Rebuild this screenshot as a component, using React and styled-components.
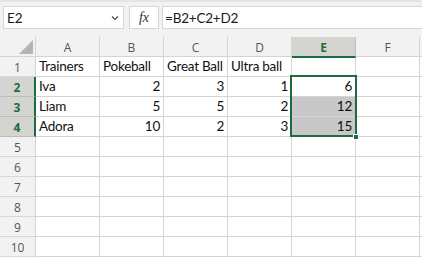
import React from "react";
import styled, { createGlobalStyle } from "styled-components";

const Global = createGlobalStyle`
  html, body { margin: 0; padding: 0; background: #ffffff; overflow: hidden; }
  * { box-sizing: border-box; }
`;

const Page = styled.div`
  width: 422px;
  height: 257px;
  overflow: hidden;
  background: #ffffff;
`;

const Toolbar = styled.div`
  height: 37px;
  background: #f2f2f2;
  border-top: 2px solid #e4e4e4;
  display: flex;
  align-items: flex-start;
  padding: 4px 0 0 3px;
  gap: 5px;
`;

const NameBox = styled.div`
  width: 121px;
  height: 23px;
  background: #fff;
  border: 1px solid #d6d6d6;
  display: flex;
  align-items: center;
  justify-content: space-between;
  padding: 0 4px 0 3px;
  font-family: "Lato", "Liberation Sans", sans-serif;
  font-size: 13.5px;
  color: #1b1b1b;
`;

const FxBox = styled.div`
  width: 30px;
  height: 23px;
  background: #fff;
  border: 1px solid #d6d6d6;
  display: flex;
  align-items: center;
  justify-content: center;
  font-family: "Liberation Serif", serif;
  font-style: italic;
  font-size: 14px;
  color: #333;
  margin-right: -2px;
`;

const FormulaBox = styled.div`
  flex: 1;
  height: 23px;
  background: #fff;
  border: 1px solid #d6d6d6;
  border-right: none;
  display: flex;
  align-items: center;
  padding-left: 2px;
  font-family: "Lato", "Liberation Sans", sans-serif;
  font-size: 13.5px;
  letter-spacing: -0.2px;
  color: #1b1b1b;
`;

const Sheet = styled.div`
  position: relative;
  display: grid;
  grid-template-columns: 36px repeat(6, 64px) 10px;
  grid-auto-rows: 20px;
`;

const Corner = styled.div`
  background: #f2f2f2;
  border-right: 1px solid #d4d4d4;
  border-bottom: 1px solid #d4d4d4;
  position: relative;
  &::after {
    content: "";
    position: absolute;
    right: 2px;
    bottom: 2px;
    width: 0;
    height: 0;
    border-style: solid;
    border-width: 0 0 14px 14px;
    border-color: transparent transparent #b4b4b4 transparent;
  }
`;

const ColHead = styled.div`
  background: ${(p) => (p.$active ? "#d4d4d0" : "#f2f2f2")};
  border-right: 1px solid ${(p) => (p.$active ? "#bdbdb8" : "#d4d4d4")};
  border-bottom: ${(p) => (p.$active ? "2px solid #1d6b40" : "1px solid #d4d4d4")};
  margin-bottom: ${(p) => (p.$active ? "-1px" : "0")};
  display: flex;
  align-items: center;
  justify-content: center;
  padding-top: 1px;
  font-family: "Open Sans", "Liberation Sans", sans-serif;
  font-size: 12px;
  font-weight: ${(p) => (p.$active ? 700 : 400)};
  color: ${(p) => (p.$active ? "#1d6b40" : "#555555")};
  z-index: ${(p) => (p.$active ? 1 : 0)};
`;

const RowHead = styled.div`
  background: ${(p) => (p.$active ? "#d4d4d0" : "#f2f2f2")};
  border-right: ${(p) => (p.$active ? "2px solid #1d6b40" : "1px solid #d4d4d4")};
  border-bottom: 1px solid ${(p) => (p.$active ? "#bdbdb8" : "#d9d9d9")};
  display: flex;
  align-items: center;
  justify-content: center;
  padding-top: 1px;
  font-family: "Open Sans", "Liberation Sans", sans-serif;
  font-size: 12px;
  font-weight: ${(p) => (p.$active ? 700 : 400)};
  color: ${(p) => (p.$active ? "#1d6b40" : "#555555")};
`;

const Cell = styled.div`
  background: ${(p) => (p.$fill ? "#c8c8c8" : "#ffffff")};
  border-right: 1px solid #d4d4d4;
  border-bottom: 1px solid #d4d4d4;
  display: flex;
  align-items: flex-end;
  justify-content: ${(p) => (p.$num ? "flex-end" : "flex-start")};
  padding: 0 3px 1px 3px;
  font-family: "Lato", "Liberation Sans", sans-serif;
  font-size: 13.5px;
  letter-spacing: -0.25px;
  line-height: 18px;
  color: #111;
  white-space: nowrap;
`;

const Selection = styled.div`
  position: absolute;
  left: 290px;
  top: 38px;
  width: 67px;
  height: 62px;
  border: 2px solid #1d6b40;
  pointer-events: none;
`;

const Handle = styled.div`
  position: absolute;
  left: 353px;
  top: 97px;
  width: 6px;
  height: 6px;
  background: #1d6b40;
  border: 1px solid #ffffff;
`;

const cols = ["A", "B", "C", "D", "E", "F", ""];
const data = [
  ["Trainers", "Pokeball", "Great Ball", "Ultra ball", "", ""],
  ["Iva", 2, 3, 1, 6, ""],
  ["Liam", 5, 5, 2, 12, ""],
  ["Adora", 10, 2, 3, 15, ""],
];

function Chevron() {
  return (
    <svg width="8" height="6" viewBox="0 0 8 6">
      <path d="M1 1.5 L4 4.5 L7 1.5" fill="none" stroke="#444" strokeWidth="1.1" />
    </svg>
  );
}

export default function App() {
  const rows = [];
  for (let r = 1; r <= 10; r++) {
    const active = r >= 2 && r <= 4;
    rows.push(
      <RowHead key={`h${r}`} $active={active}>
        {r}
      </RowHead>
    );
    for (let c = 0; c < 7; c++) {
      const v = data[r - 1] ? data[r - 1][c] ?? "" : "";
      const num = typeof v === "number";
      const fill = c === 4 && (r === 3 || r === 4);
      rows.push(
        <Cell key={`${r}-${c}`} $num={num} $fill={fill}>
          {v}
        </Cell>
      );
    }
  }
  return (
    <Page>
      <Global />
      <Toolbar>
        <NameBox>
          <span>E2</span>
          <Chevron />
        </NameBox>
        <FxBox>fx</FxBox>
        <FormulaBox>=B2+C2+D2</FormulaBox>
      </Toolbar>
      <Sheet>
        <Corner />
        {cols.map((c, i) => (
          <ColHead key={i} $active={c === "E"}>
            {c}
          </ColHead>
        ))}
        {rows}
        <Selection />
        <Handle />
      </Sheet>
    </Page>
  );
}
